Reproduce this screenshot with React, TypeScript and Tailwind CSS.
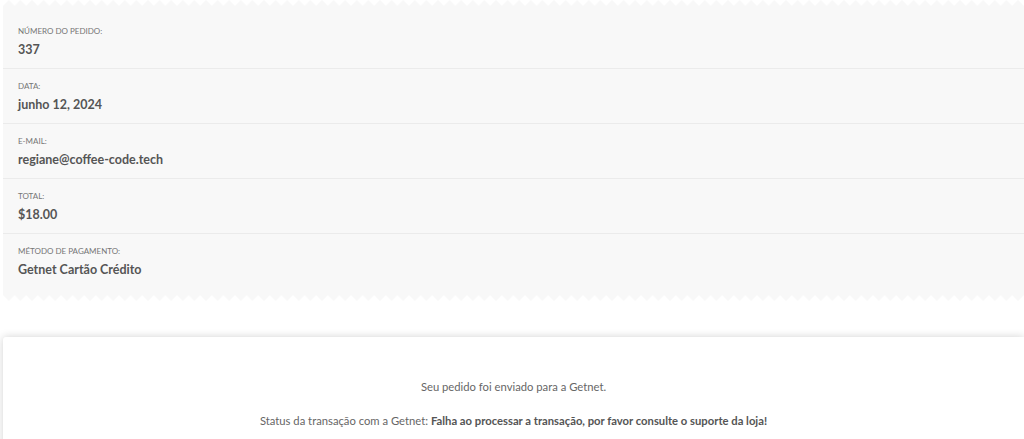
import React from "react";

const rows = [
  { label: "Número do pedido:", value: "337" },
  { label: "Data:", value: "junho 12, 2024" },
  { label: "E-mail:", value: "regiane@coffee-code.tech" },
  { label: "Total:", value: "$18.00" },
  { label: "Método de pagamento:", value: "Getnet Cartão Crédito" },
];

function Zigzag({ flip }: { flip?: boolean }) {
  const id = flip ? "zzb" : "zzt";
  return (
    <svg className="block w-full h-[6px]" preserveAspectRatio="none">
      <defs>
        <pattern id={id} width="11.6" height="6" patternUnits="userSpaceOnUse">
          {flip ? (
            <polygon points="0,0 11.6,0 5.8,6" fill="#f8f8f8" />
          ) : (
            <polygon points="0,6 5.8,0 11.6,6" fill="#f8f8f8" />
          )}
        </pattern>
      </defs>
      <rect width="100%" height="6" fill={`url(#${id})`} />
    </svg>
  );
}

export default function App() {
  return (
    <div
      className="bg-white w-[1024px] h-[439px] overflow-hidden"
      style={{ fontFamily: "Lato, 'Liberation Sans', sans-serif" }}
    >
      <div className="ml-[3px]">
        <Zigzag />
        <div className="bg-[#f8f8f8] pt-[8px] pb-[16px]">
          {rows.map((r, i) => (
            <div
              key={r.label}
              className={`pl-[15px] pt-[11px] ${
                i < rows.length - 1 ? "pb-[9px] border-b border-[#ebebeb]" : ""
              }`}
            >
              <div className="text-[8px] leading-[12px] uppercase text-[#767676]">
                {r.label}
              </div>
              <div className="mt-[4px] text-[12.5px] leading-[18px] font-bold text-[#555]">
                {r.value}
              </div>
            </div>
          ))}
        </div>
        <Zigzag flip />
      </div>
      <div className="ml-[3px] mt-[36px] bg-white rounded-tl-[3px] shadow-[0_0_8px_rgba(0,0,0,0.18)] h-[200px] pt-[43px] text-center text-[11.25px] text-[#666]">
        <p className="leading-[14px]">Seu pedido foi enviado para a Getnet.</p>
        <p className="leading-[14px] mt-[20px]">
          Status da transação com a Getnet:{" "}
          <strong className="font-bold text-[#555]">
            Falha ao processar a transação, por favor consulte o suporte da loja!
          </strong>
        </p>
      </div>
    </div>
  );
}
